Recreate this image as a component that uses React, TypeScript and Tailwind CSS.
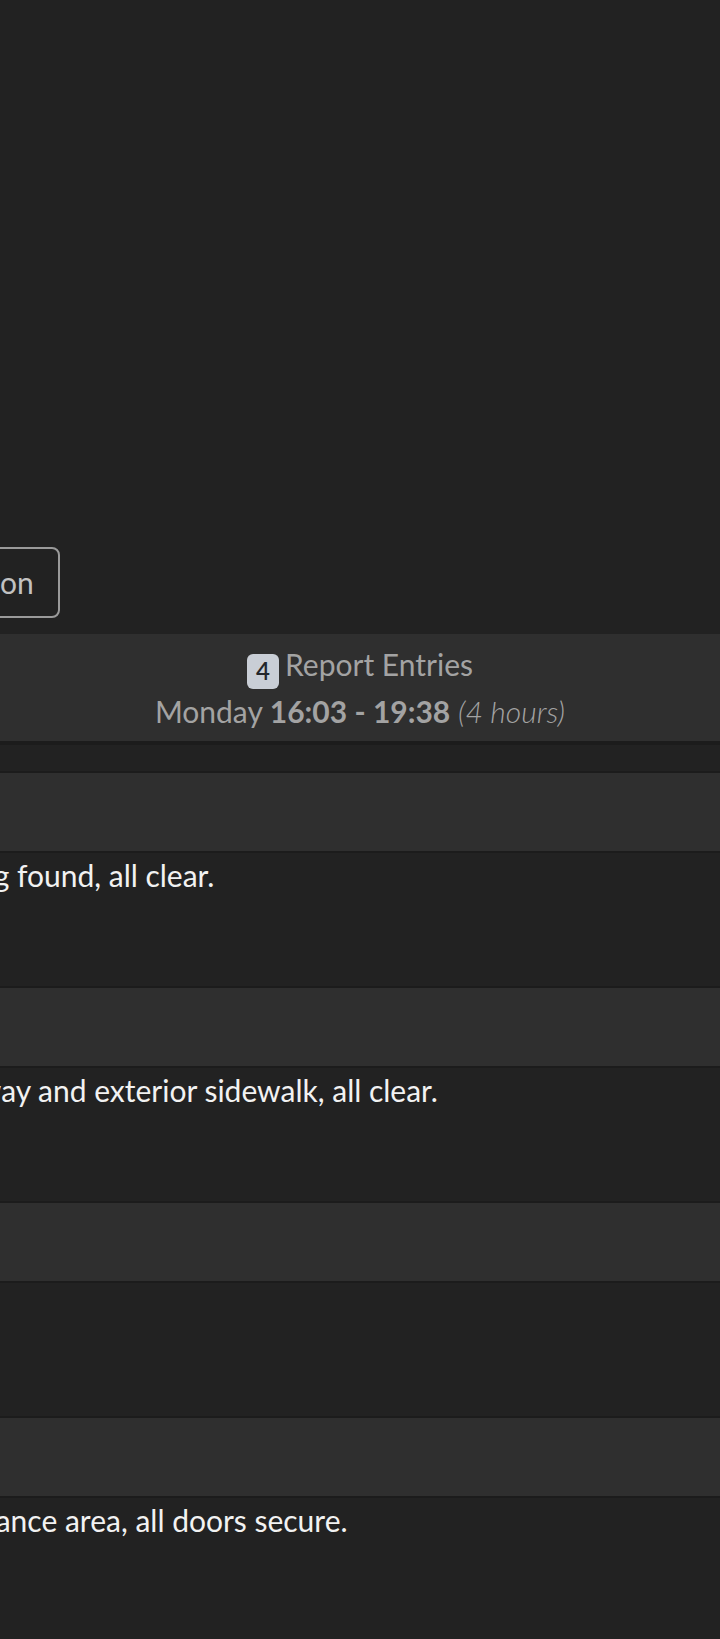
import React from 'react';

interface Entry {
  id: number;
  note: string;
}

const entries: Entry[] = [
  { id: 1, note: 'Full sweep, nothing found, all clear.' },
  { id: 2, note: 'Walked the driveway and exterior sidewalk, all clear.' },
  { id: 3, note: '' },
  { id: 4, note: 'Inspected the entrance area, all doors secure.' },
];

const ReportHeader: React.FC = () => (
  <div className="bg-[#2f2f2f] border-b-4 border-[#1c1c1c] pt-[8px] pb-[7px] text-center text-[30px] leading-[45px] text-[#a3a3a3]">
    <div>
      <span className="inline-flex items-center justify-center w-[32px] h-[35px] mr-[6px] rounded-[6px] bg-[#c9ced6] text-[24px] leading-none font-semibold text-[#23262b] align-[-4px]">
        4
      </span>
      Report Entries
    </div>
    <div>
      Monday <span className="font-bold">16:03 - 19:38</span>{' '}
      <span className="italic font-light">(4 hours)</span>
    </div>
  </div>
);

const EntryRow: React.FC<{ entry: Entry }> = ({ entry }) => (
  <div>
    <div className="h-[82px] bg-[#2f2f2f] border-y-2 border-[#1c1c1c]" />
    <div className="h-[133px] pl-[20px] text-[30px] leading-[44px] text-[#f2f2f2] whitespace-nowrap">
      {entry.note}
    </div>
  </div>
);

export default function App() {
  return (
    <div
      className="min-h-screen w-full overflow-hidden bg-[#222222]"
      style={{ fontFamily: 'Lato, "Open Sans", "Liberation Sans", sans-serif' }}
    >
      <div className="w-[1250px] ml-[-265px]">
        <div className="h-[634px] flex items-end pb-[16px] pl-[99px]">
          <button
            type="button"
            className="h-[71px] px-[24px] rounded-lg border-2 border-[#9a9a9a] text-[30px] text-[#c2c2c2]"
          >
            Add Location
          </button>
        </div>

        <ReportHeader />

        <div className="pt-[26px]">
          {entries.map((entry) => (
            <EntryRow key={entry.id} entry={entry} />
          ))}
        </div>
      </div>
    </div>
  );
}
